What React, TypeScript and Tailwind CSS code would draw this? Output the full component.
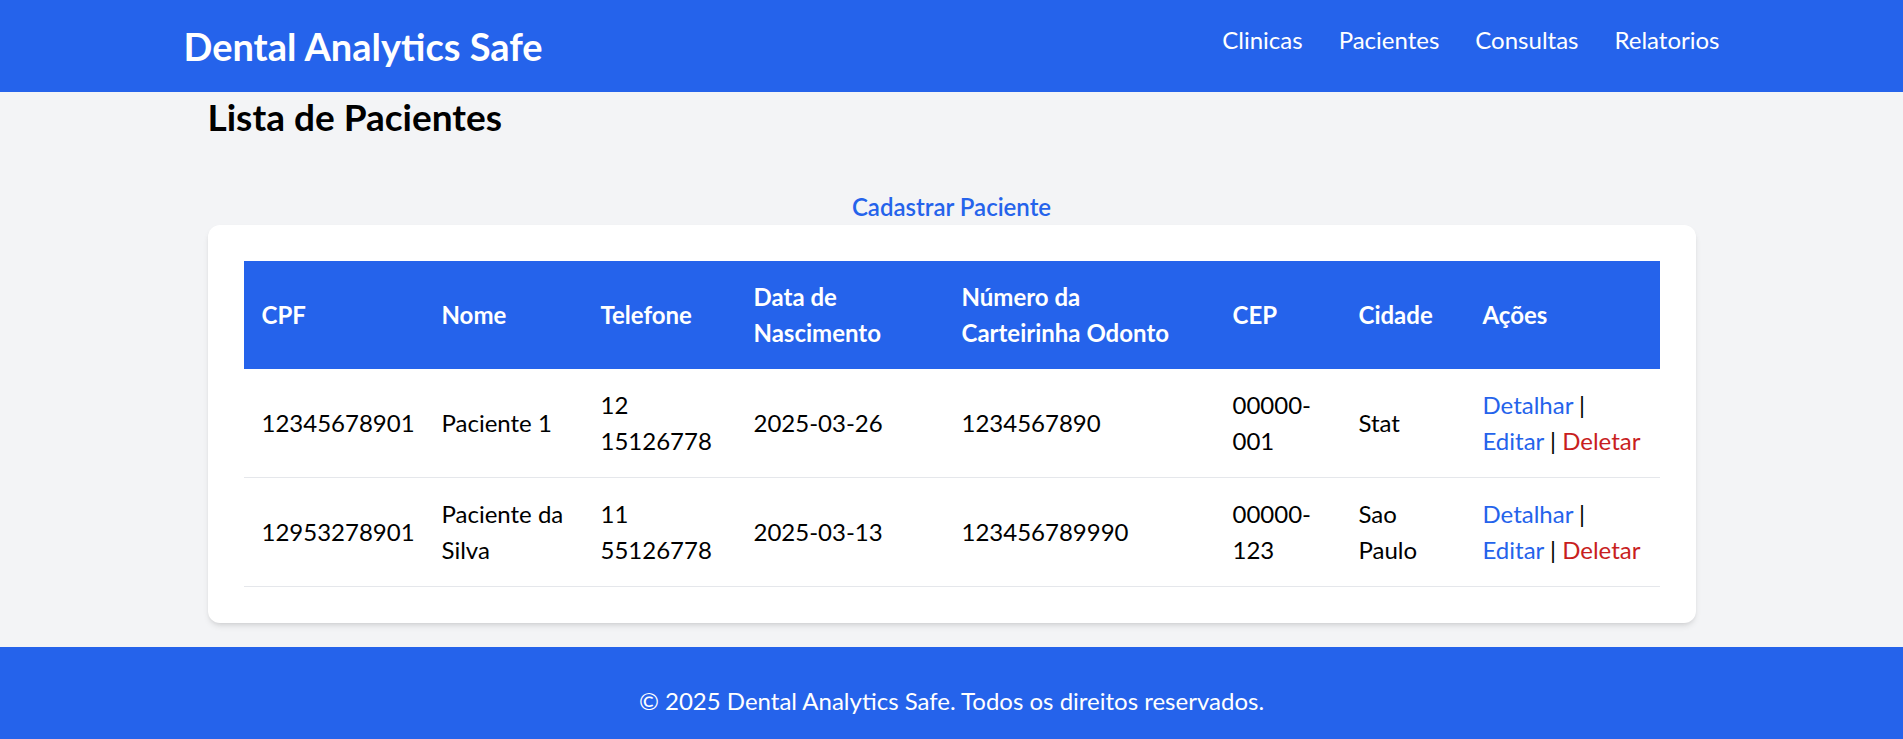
import React from 'react';

type Paciente = {
  cpf: string;
  nome: string;
  telefone: string;
  nascimento: string;
  carteirinha: string;
  cep: string;
  cidade: string;
};

const PACIENTES: Paciente[] = [
  {
    cpf: '12345678901',
    nome: 'Paciente 1',
    telefone: '12 15126778',
    nascimento: '2025-03-26',
    carteirinha: '1234567890',
    cep: '00000-001',
    cidade: 'Stat',
  },
  {
    cpf: '12953278901',
    nome: 'Paciente da Silva',
    telefone: '11 55126778',
    nascimento: '2025-03-13',
    carteirinha: '123456789990',
    cep: '00000-123',
    cidade: 'Sao Paulo',
  },
];

const COLUMNS = [
  { label: 'CPF', width: 'w-[180px]' },
  { label: 'Nome', width: 'w-[159px]' },
  { label: 'Telefone', width: 'w-[153px]' },
  { label: 'Data de Nascimento', width: 'w-[208px]' },
  { label: 'Número da Carteirinha Odonto', width: 'w-[271px]' },
  { label: 'CEP', width: 'w-[126px]' },
  { label: 'Cidade', width: 'w-[124px]' },
  { label: 'Ações', width: 'w-[195px]' },
];

const Header: React.FC = () => (
  <header className="bg-[#2563eb] text-white">
    <div className="max-w-[1536px] mx-auto h-[92px] flex items-center justify-between">
      <h1 className="text-[38px] leading-12 font-bold">Dental Analytics Safe</h1>
      <nav className="mb-3 flex gap-9 text-2xl leading-9">
        <a href="#">Clinicas</a>
        <a href="#">Pacientes</a>
        <a href="#">Consultas</a>
        <a href="#">Relatorios</a>
      </nav>
    </div>
  </header>
);

const PacientesTable: React.FC = () => (
  <table className="w-full table-fixed text-left">
    <thead>
      <tr className="bg-[#2563eb] text-white">
        {COLUMNS.map(col => (
          <th key={col.label} className={`${col.width} px-[18px] py-[18px] font-bold align-middle`}>
            {col.label}
          </th>
        ))}
      </tr>
    </thead>
    <tbody>
      {PACIENTES.map(p => (
        <tr key={p.cpf} className="border-b border-[#e5e7eb]">
          <td className="px-[18px] py-[18px]">{p.cpf}</td>
          <td className="px-[18px] py-[18px]">{p.nome}</td>
          <td className="px-[18px] py-[18px]">{p.telefone}</td>
          <td className="px-[18px] py-[18px]">{p.nascimento}</td>
          <td className="px-[18px] py-[18px]">{p.carteirinha}</td>
          <td className="px-[18px] py-[18px]">{p.cep}</td>
          <td className="px-[18px] py-[18px]">{p.cidade}</td>
          <td className="px-[18px] py-[18px]">
            <a href="#" className="text-[#2563eb]">Detalhar</a> |{' '}
            <span className="whitespace-nowrap">
              <a href="#" className="text-[#2563eb]">Editar</a> |{' '}
              <a href="#" className="text-[#c81e1e]">Deletar</a>
            </span>
          </td>
        </tr>
      ))}
    </tbody>
  </table>
);

const App: React.FC = () => {
  return (
    <div className="min-h-screen bg-[#f3f4f6] text-black font-['Lato',sans-serif] text-2xl leading-9">
      <Header />
      <main className="max-w-[1536px] mx-auto px-6">
        <h2 className="pt-[1px] mb-12 text-[37px] leading-12 font-bold">Lista de Pacientes</h2>
        <div className="text-center">
          <a href="#" className="font-semibold text-[#2563eb]">Cadastrar Paciente</a>
        </div>
        <div className="bg-white rounded-xl shadow-md p-9">
          <PacientesTable />
        </div>
      </main>
      <footer className="mt-6 bg-[#2563eb] text-white text-center py-9">
        © 2025 Dental Analytics Safe. Todos os direitos reservados.
      </footer>
    </div>
  );
};

export default App;
